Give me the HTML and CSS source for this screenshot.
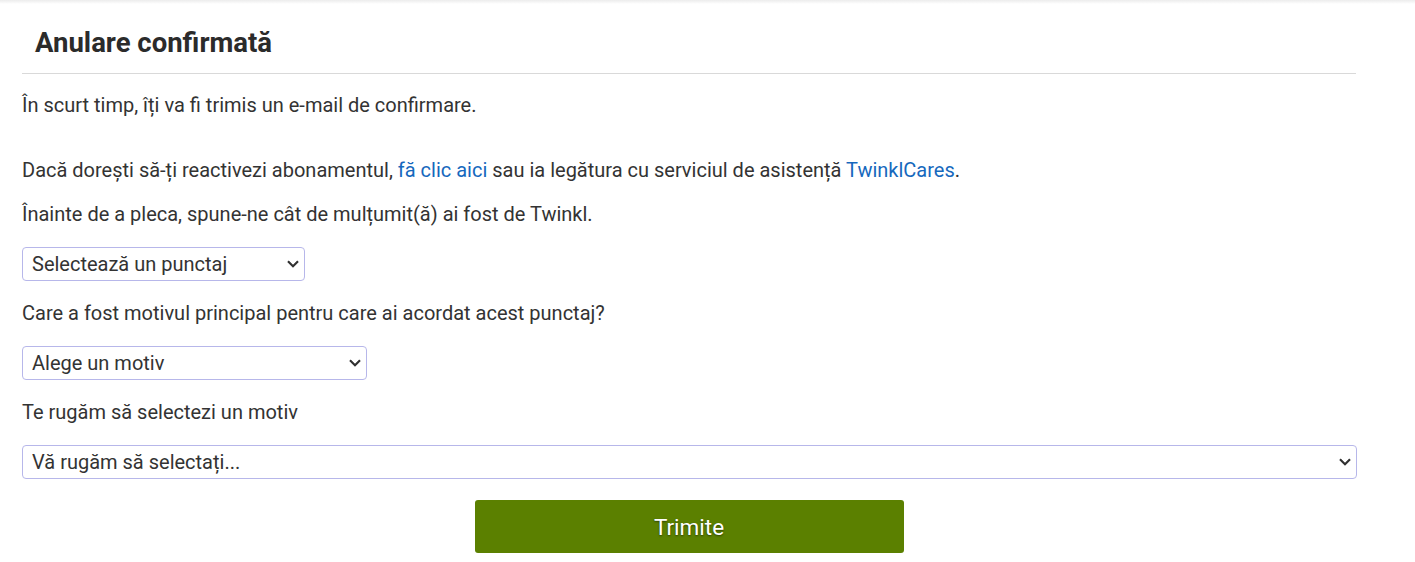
FILE: index.html
```html
<!DOCTYPE html>
<html lang="ro">
<head>
<meta charset="utf-8">
<title>Anulare confirmată</title>
<link rel="stylesheet" href="styles.css">
</head>
<body>
<div class="shade"></div>
<main class="panel">
  <h1 class="title">Anulare confirmată</h1>
  <div class="content">
    <p class="text lead">În scurt timp, îți va fi trimis un e-mail de confirmare.</p>
    <div class="intro">
      <p class="text">Dacă dorești să-ți reactivezi abonamentul, <a href="#" class="link">fă clic aici</a> sau ia legătura cu serviciul de asistență <a href="#" class="link">TwinklCares</a>.</p>
      <p class="text">Înainte de a pleca, spune-ne cât de mulțumit(ă) ai fost de Twinkl.</p>
    </div>
    <select class="field field-score">
      <option>Selectează un punctaj</option>
    </select>
    <p class="text">Care a fost motivul principal pentru care ai acordat acest punctaj?</p>
    <select class="field field-reason">
      <option>Alege un motiv</option>
    </select>
    <p class="text">Te rugăm să selectezi un motiv</p>
    <select class="field field-full">
      <option>Vă rugăm să selectați...</option>
    </select>
    <div class="actions">
      <button class="submit" type="button">Trimite</button>
    </div>
  </div>
</main>
</body>
</html>
```

FILE: styles.css
```css
html, body {
  margin: 0;
  padding: 0;
  background: #ffffff;
}

body {
  font-family: Roboto, "Liberation Sans", Arial, sans-serif;
  color: #333333;
}

.shade {
  height: 4px;
  background: linear-gradient(#ececec, #ffffff);
}

.panel {
  width: 1334px;
  margin: 0 0 0 22px;
}

.title {
  margin: 24px 0 0 0;
  padding: 0 0 15px 13px;
  font-size: 27.5px;
  line-height: 30px;
  font-weight: 700;
  color: #2b2b2b;
  border-bottom: 1px solid #d9d9d9;
}

.content {
  display: flex;
  flex-direction: column;
  align-items: flex-start;
  gap: 17px;
  padding-top: 16px;
}

.intro {
  display: flex;
  flex-direction: column;
  gap: 14px;
}

.text {
  margin: 0;
  font-size: 20px;
  line-height: 30px;
}

.lead {
  margin-bottom: 18px;
}

.link {
  color: #1668bd;
  text-decoration: none;
}

.field {
  -webkit-appearance: none;
  appearance: none;
  box-sizing: border-box;
  height: 34px;
  font-family: Roboto, "Liberation Sans", Arial, sans-serif;
  font-size: 20px;
  color: #333333;
  background-color: #ffffff;
  background-image: url("data:image/svg+xml,%3Csvg xmlns='http://www.w3.org/2000/svg' width='12' height='8' viewBox='0 0 12 8'%3E%3Cpath d='M1 1.3l5 5 5-5' fill='none' stroke='%23333333' stroke-width='2.2'/%3E%3C/svg%3E");
  background-repeat: no-repeat;
  background-position: right 5px center;
  background-size: 12px 8px;
  border: 1px solid #b7b7ea;
  border-radius: 4px;
  padding: 0 24px 0 9px;
  margin: 1px 0 0 0;
}

.field-score { width: 283px; }
.field-reason { width: 345px; }
.field-full { width: 1335px; }

.actions {
  align-self: stretch;
  display: flex;
  justify-content: center;
  padding-top: 4px;
}

.submit {
  width: 429px;
  height: 53px;
  background: #5b8000;
  color: #ffffff;
  border: none;
  border-radius: 3px;
  font-family: Roboto, "Liberation Sans", Arial, sans-serif;
  font-size: 22.5px;
  text-shadow: 0 1px 2px rgba(0,0,0,0.5);
}
```
